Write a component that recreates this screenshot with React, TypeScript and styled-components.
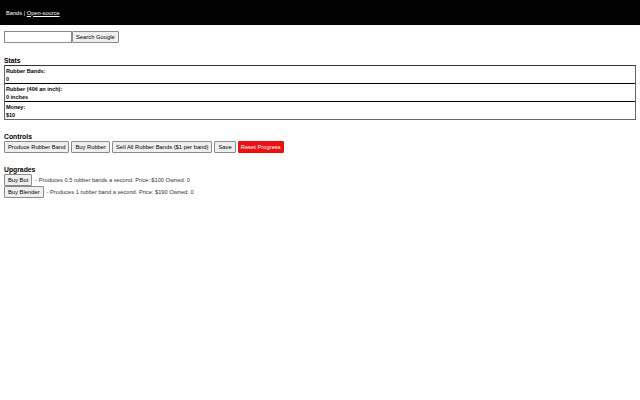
import React from "react";
import { styled, createGlobalStyle } from "styled-components";

const font = `"Liberation Sans", Arial, sans-serif`;

const GlobalStyle = createGlobalStyle`
  html, body {
    margin: 0;
    padding: 0;
    background: #fff;
    font-family: ${font};
    font-size: 5.6px;
    color: #000;
  }
`;

const StHeader = styled.header`
  height: 25px;
  background: #000;
  color: #fff;
  display: flex;
  align-items: center;
  padding: 0 6px;
  font-size: 5.7px;
  a {
    color: #fff;
    text-decoration: underline;
  }
`;

const StMain = styled.main`
  padding: 6px 4px;
`;

const StSearch = styled.form`
  display: flex;
  height: 12px;
`;

const StInput = styled.input`
  width: 68px;
  height: 12px;
  box-sizing: border-box;
  border: 1px solid #8a8a8a;
  padding: 0 2px;
  font-size: 5.8px;
  margin: 0;
`;

const StButton = styled.button<{ $danger?: boolean }>`
  height: 12px;
  box-sizing: border-box;
  padding: 0 ${(p) => (p.$danger ? 2 : 3)}px;
  margin: 0;
  font-family: ${font};
  font-size: 5.8px;
  line-height: 10px;
  border: 1px solid ${(p) => (p.$danger ? "#e81010" : "#8a8a8a")};
  border-radius: 1px;
  background: ${(p) => (p.$danger ? "#ee1111" : "#efefef")};
  color: ${(p) => (p.$danger ? "#fff" : "#000")};
  white-space: nowrap;
`;

const StHeading = styled.h2`
  font-size: 6.8px;
  font-weight: bold;
  margin: 0;
  line-height: 9px;
`;

const StSection = styled.section<{ $top: number }>`
  margin-top: ${(p) => p.$top}px;
`;

const StStats = styled.div`
  border: 1px solid #666;
  border-top-color: #333;
`;

const StStatRow = styled.div`
  height: 17px;
  padding: 1px 0 0 1px;
  box-sizing: border-box;
  font-weight: bold;
  font-size: 5.5px;
  line-height: 8px;
  & + & {
    border-top: 1px solid #000;
    height: 18px;
  }
`;

const StControls = styled.div`
  display: flex;
  gap: 2px;
`;

const StUpgrade = styled.div`
  display: flex;
  align-items: center;
  gap: 3px;
  height: 12px;
  color: #333;
  font-size: 5.7px;
`;

const stats = [
  { label: "Rubber Bands:", value: "0" },
  { label: "Rubber (40¢ an inch):", value: "0 inches" },
  { label: "Money:", value: "$10" },
];

const upgrades = [
  { name: "Buy Bot", text: "- Produces 0.5 rubber bands a second. Price: $100 Owned: 0" },
  { name: "Buy Blender", text: "- Produces 1 rubber band a second. Price: $190 Owned: 0" },
];

export default function App() {
  return (
    <>
      <GlobalStyle />
      <StHeader>
        Bands |&nbsp;<a href="#">Open-source</a>
      </StHeader>
      <StMain>
        <StSearch onSubmit={(e) => e.preventDefault()}>
          <StInput type="text" />
          <StButton type="submit">Search Google</StButton>
        </StSearch>

        <StSection $top={13}>
          <StHeading>Stats</StHeading>
          <StStats>
            {stats.map((s) => (
              <StStatRow key={s.label}>
                <div>{s.label}</div>
                <div>{s.value}</div>
              </StStatRow>
            ))}
          </StStats>
        </StSection>

        <StSection $top={12}>
          <StHeading>Controls</StHeading>
          <StControls>
            <StButton>Produce Rubber Band</StButton>
            <StButton>Buy Rubber</StButton>
            <StButton>Sell All Rubber Bands ($1 per band)</StButton>
            <StButton>Save</StButton>
            <StButton $danger>Reset Progress</StButton>
          </StControls>
        </StSection>

        <StSection $top={12}>
          <StHeading>Upgrades</StHeading>
          {upgrades.map((u) => (
            <StUpgrade key={u.name}>
              <StButton>{u.name}</StButton>
              <span>{u.text}</span>
            </StUpgrade>
          ))}
        </StSection>
      </StMain>
    </>
  );
}
